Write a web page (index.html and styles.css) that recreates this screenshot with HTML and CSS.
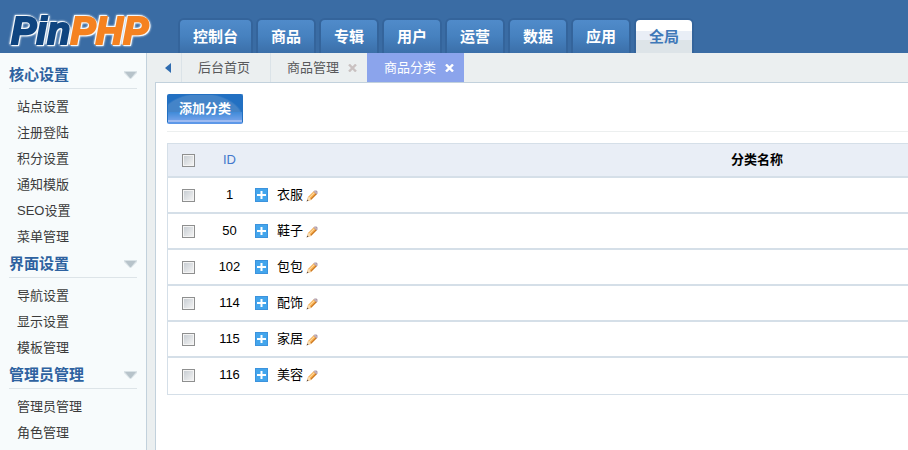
FILE: index.html
```
<!DOCTYPE html>
<html lang="zh-CN">
  <head>
    <meta charset="utf-8">
    <title>PinPHP</title>
    <link rel="stylesheet" href="styles.css">
  </head>
  <body>

    <svg class="display-none">
      <symbol id="icon-arrow-down" viewBox="0 0 13 8">
        <path d="M0 0h13v2L7 8H6L0 2z" fill="#d9e2e6"/>
        <path d="M1 1h11L7 7H6z" fill="#b7c3ca"/>
      </symbol>
      <symbol id="icon-close" viewBox="0 0 9 8">
        <path d="M1 .5l7 7M8 .5l-7 7" fill="none" stroke="currentColor" stroke-width="2.4"/>
      </symbol>
      <symbol id="icon-plus" viewBox="0 0 13 14">
        <rect width="13" height="14" fill="#3c93dd"/>
        <rect x="1" y="1" width="11" height="12" fill="#43a5ec"/>
        <path d="M5.500 3h2v3H11v2H7.500v3h-2V8H2V6h3.500z" fill="#fff"/>
      </symbol>
      <symbol id="icon-pencil" viewBox="0 0 12 12">
        <path d="M1 11l1-4 6-6h2l1 1v2L5 10z" fill="#f2a23e"/>
        <path d="M3 8l5.500-5.500" stroke="#ffd89a" stroke-width="1.300"/>
        <path d="M4.500 9.800L10.300 4" stroke="#b9691e"/>
        <path d="M7.500 1.500L8.500 .5h2l1 1v2L10.500 4.500z" fill="#a99aa6"/>
        <path d="M8.500 1l2.500 2.500" stroke="#dcc3cf"/>
        <path d="M2 7L1 11l4-1-1-2z" fill="#f7dcb4"/>
        <path d="M.5 11.500l.8-2 1.200 1.200z" fill="#5b463a"/>
      </symbol>
    </svg>

    <header class="header">
      <a class="logo" href="#" aria-label="PinPHP">
        <svg width="150" height="48" viewBox="0 0 150 48">
          <text x="3" y="39"><tspan class="logo-pin">Pin</tspan><tspan class="logo-php">PHP</tspan></text>
        </svg>
      </a>
      <nav class="main-nav">
        <a href="#">控制台</a>
        <a href="#">商品</a>
        <a href="#">专辑</a>
        <a href="#">用户</a>
        <a href="#">运营</a>
        <a href="#">数据</a>
        <a href="#">应用</a>
        <a href="#" class="active">全局</a>
      </nav>
    </header>

    <div class="wrapper">
      <aside class="sidebar">
        <h3>核心设置 <svg class="arrow-down"><use href="#icon-arrow-down"/></svg></h3>
        <ul>
          <li><a href="#">站点设置</a></li>
          <li><a href="#">注册登陆</a></li>
          <li><a href="#">积分设置</a></li>
          <li><a href="#">通知模版</a></li>
          <li><a href="#">SEO设置</a></li>
          <li><a href="#">菜单管理</a></li>
        </ul>
        <h3>界面设置 <svg class="arrow-down"><use href="#icon-arrow-down"/></svg></h3>
        <ul>
          <li><a href="#">导航设置</a></li>
          <li><a href="#">显示设置</a></li>
          <li><a href="#">模板管理</a></li>
        </ul>
        <h3>管理员管理 <svg class="arrow-down"><use href="#icon-arrow-down"/></svg></h3>
        <ul>
          <li><a href="#">管理员管理</a></li>
          <li><a href="#">角色管理</a></li>
        </ul>
      </aside>

      <div class="page">
        <div class="tabs">
          <button class="tabs-prev" type="button" aria-label="向左">
            <svg width="6" height="10" viewBox="0 0 6 10"><path d="M6 0v10L0 5z" fill="#2f6cb0"/></svg>
          </button>
          <div class="tab"><a href="#">后台首页</a></div>
          <div class="tab">
            <a href="#">商品管理</a>
            <button type="button" aria-label="关闭商品管理"><svg class="close"><use href="#icon-close"/></svg></button>
          </div>
          <div class="tab active">
            <a href="#">商品分类</a>
            <button type="button" aria-label="关闭商品分类"><svg class="close"><use href="#icon-close"/></svg></button>
          </div>
        </div>

        <main class="content">
          <div class="toolbar">
            <button class="btn-add" type="button">添加分类</button>
          </div>

          <table class="list">
            <thead>
              <tr>
                <th class="col-check"><input type="checkbox" aria-label="全选"></th>
                <th class="col-id"><a href="#">ID</a></th>
                <th>分类名称</th>
              </tr>
            </thead>
            <tbody>
              <tr>
                <td class="col-check"><input type="checkbox" aria-label="选择衣服"></td>
                <td class="col-id">1</td>
                <td><div class="name"><button type="button" aria-label="展开衣服"><svg class="plus"><use href="#icon-plus"/></svg></button><span>衣服</span><button type="button" aria-label="编辑衣服"><svg class="pencil"><use href="#icon-pencil"/></svg></button></div></td>
              </tr>
              <tr>
                <td class="col-check"><input type="checkbox" aria-label="选择鞋子"></td>
                <td class="col-id">50</td>
                <td><div class="name"><button type="button" aria-label="展开鞋子"><svg class="plus"><use href="#icon-plus"/></svg></button><span>鞋子</span><button type="button" aria-label="编辑鞋子"><svg class="pencil"><use href="#icon-pencil"/></svg></button></div></td>
              </tr>
              <tr>
                <td class="col-check"><input type="checkbox" aria-label="选择包包"></td>
                <td class="col-id">102</td>
                <td><div class="name"><button type="button" aria-label="展开包包"><svg class="plus"><use href="#icon-plus"/></svg></button><span>包包</span><button type="button" aria-label="编辑包包"><svg class="pencil"><use href="#icon-pencil"/></svg></button></div></td>
              </tr>
              <tr>
                <td class="col-check"><input type="checkbox" aria-label="选择配饰"></td>
                <td class="col-id">114</td>
                <td><div class="name"><button type="button" aria-label="展开配饰"><svg class="plus"><use href="#icon-plus"/></svg></button><span>配饰</span><button type="button" aria-label="编辑配饰"><svg class="pencil"><use href="#icon-pencil"/></svg></button></div></td>
              </tr>
              <tr>
                <td class="col-check"><input type="checkbox" aria-label="选择家居"></td>
                <td class="col-id">115</td>
                <td><div class="name"><button type="button" aria-label="展开家居"><svg class="plus"><use href="#icon-plus"/></svg></button><span>家居</span><button type="button" aria-label="编辑家居"><svg class="pencil"><use href="#icon-pencil"/></svg></button></div></td>
              </tr>
              <tr>
                <td class="col-check"><input type="checkbox" aria-label="选择美容"></td>
                <td class="col-id">116</td>
                <td><div class="name"><button type="button" aria-label="展开美容"><svg class="plus"><use href="#icon-plus"/></svg></button><span>美容</span><button type="button" aria-label="编辑美容"><svg class="pencil"><use href="#icon-pencil"/></svg></button></div></td>
              </tr>
            </tbody>
          </table>
        </main>
      </div>
    </div>

  </body>
</html>
```
FILE: styles.css
```
* {
  box-sizing: border-box;
}

body {
  display: flex;
  flex-flow: column;
  min-height: 100vh;
  margin: 0px;
  background: #ebeff0;
  color: #000;
  font: 13px/20px 'Liberation Sans', 'Noto Sans CJK SC', sans-serif;
}

a {
  color: inherit;
  text-decoration: none;
}

button {
  border: 0px;
  margin: 0px;
  padding: 0px;
  background: none;
  color: inherit;
  font: inherit;
  cursor: pointer;
}

svg {
  display: block;
}

.display-none {
  display: none;
}


/* Header */

.header {
  display: flex;
  align-items: flex-end;
  height: 53px;
  background: #3a6ca4;
  overflow: hidden;
}

.logo {
  width: 179px;
  padding-left: 8px;
}
.logo svg {
  filter: drop-shadow(1px 1px 0px #f4f8fb) drop-shadow(-1px -1px 0px #f4f8fb) drop-shadow(0px 0px 1px #f4f8fb);
}
.logo text {
  font: italic bold 38px 'Liberation Sans', sans-serif;
  stroke-width: 2px;
}
.logo-pin {
  fill: #0f4580;
  stroke: #0f4580;
}
.logo-php {
  fill: #f58220;
  stroke: #f58220;
}

.main-nav {
  display: flex;
  gap: 7px;
  padding-left: 1px;
}
.main-nav a {
  height: 33px;
  padding: 0px 13px;
  border-radius: 4px 4px 0px 0px;
  background: linear-gradient(#508bca, #4681bf 50%, #3b6fa9);
  box-shadow: 0px 0px 0px 2px #34649b;
  color: #fff;
  font-size: 15px;
  font-weight: bold;
  line-height: 33px;
}
.main-nav .active {
  background: linear-gradient(#fff 33%, #e9eef6 33%, #e9eef6 60%, #dde4e8 60%);
  color: #3f78b8;
}


/* Sidebar */

.wrapper {
  display: flex;
  flex: 1;
}

.sidebar {
  flex: none;
  width: 147px;
  padding: 8px 9px;
  border-right: 1px solid #c2d1dc;
  background: #f7fbfc;
}
.sidebar h3 {
  display: flex;
  align-items: center;
  justify-content: space-between;
  height: 28px;
  margin: 0px 0px 5px;
  border-bottom: 1px solid #dde4e8;
  color: #2e62a0;
  font-size: 15px;
}
.sidebar ul {
  margin: 0px;
  padding: 0px 0px 0px 8px;
  list-style: none;
  color: #3b3b3b;
  line-height: 26px;
}
.arrow-down {
  width: 13px;
  height: 8px;
}


/* Tabs */

.page {
  display: flex;
  flex: 1;
  flex-flow: column;
  min-width: 0px;
  padding-left: 8px;
}

.tabs {
  display: flex;
  height: 29px;
  color: #58595b;
}
.tabs-prev {
  display: flex;
  align-items: center;
  justify-content: center;
  width: 26px;
}
.tab {
  display: flex;
  align-items: center;
  gap: 9px;
  padding: 0px 10px 0px 16px;
  border-left: 1px solid #dbe3e8;
}
.tab:nth-child(2) {
  padding-right: 20px;
}
.tab.active {
  border-color: #8ba4ec;
  background: #8ba4ec;
  color: #fff;
}
.tab button {
  color: #c9c1c1;
}
.tab.active button {
  color: #fff;
}
.close {
  width: 9px;
  height: 8px;
}


/* Content */

.content {
  flex: 1;
  padding: 11px 0px 0px 11px;
  border-top: 1px solid #c2d1dc;
  border-left: 1px solid #c2d1dc;
  background: #fff;
  overflow: hidden;
}

.toolbar {
  padding-bottom: 7px;
  border-bottom: 1px solid #ecefef;
  margin-bottom: 11px;
}
.btn-add {
  display: block;
  height: 30px;
  padding: 0px 11px;
  border: 1px solid #2270c2;
  border-bottom: 2px solid #5d98e8;
  border-radius: 2px;
  background:
    linear-gradient(transparent 17px, #3f8ad8 17px, #6fa0e8 25px, #9dbaf0 25px),
    radial-gradient(ellipse at 45% 100%, #4484c8 72%, #2270c2 76%);
  color: #fff;
  font-weight: bold;
}

.list {
  width: 100%;
  min-width: 1098px;
  border: 1px solid #d5dfe8;
  border-spacing: 0px;
  table-layout: fixed;
}
.list th,
.list td {
  height: 36px;
  padding: 0px;
  border-bottom: 2px solid #d5dfe8;
}
.list th {
  height: 34px;
  background: #e9eef6;
}
.list tr:last-child td {
  border-bottom-color: #fff;
}
.list thead tr:last-child th {
  border-bottom-color: #d5dfe8;
}
.list .col-check {
  width: 41px;
  text-align: center;
}
.list .col-id {
  width: 41px;
  text-align: center;
}
.col-id a {
  color: #4378cc;
  font-weight: normal;
}

input[type="checkbox"] {
  display: block;
  width: 13px;
  height: 13px;
  margin: 0px auto;
  border: 1px solid #8e8f8f;
  background: linear-gradient(135deg, #c4cad0, #f6f6f6);
  box-shadow: inset 0px 0px 0px 1px #f4f4f4;
  appearance: none;
}
input[type="checkbox"]:checked {
  background: #3c93dd;
}

.name {
  display: flex;
  align-items: center;
  padding-left: 5px;
}
.name span {
  padding: 0px 3px 0px 9px;
}
.plus {
  width: 13px;
  height: 14px;
}
.pencil {
  width: 12px;
  height: 12px;
  margin-top: 2px;
}
```
